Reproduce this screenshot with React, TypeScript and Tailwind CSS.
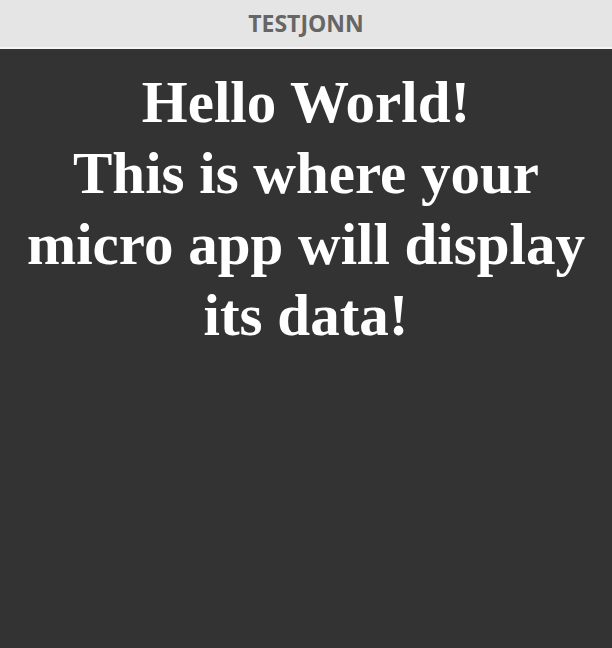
export default function App() {
  return (
    <div className="flex h-[648px] w-[612px] flex-col bg-[#333333]">
      <header className="flex h-[49px] items-center justify-center border-b-2 border-[#f4f4f4] bg-[#e5e5e5]">
        <span className="font-['Open_Sans',sans-serif] text-[23px] font-bold text-[#666666]">
          TESTJONN
        </span>
      </header>
      <h1 className="mt-[18px] px-2 text-center font-['Liberation_Serif',serif] text-[59px] leading-[71px] font-bold text-white">
        Hello World!
        <br />
        This is where your micro app will display its data!
      </h1>
    </div>
  );
}
